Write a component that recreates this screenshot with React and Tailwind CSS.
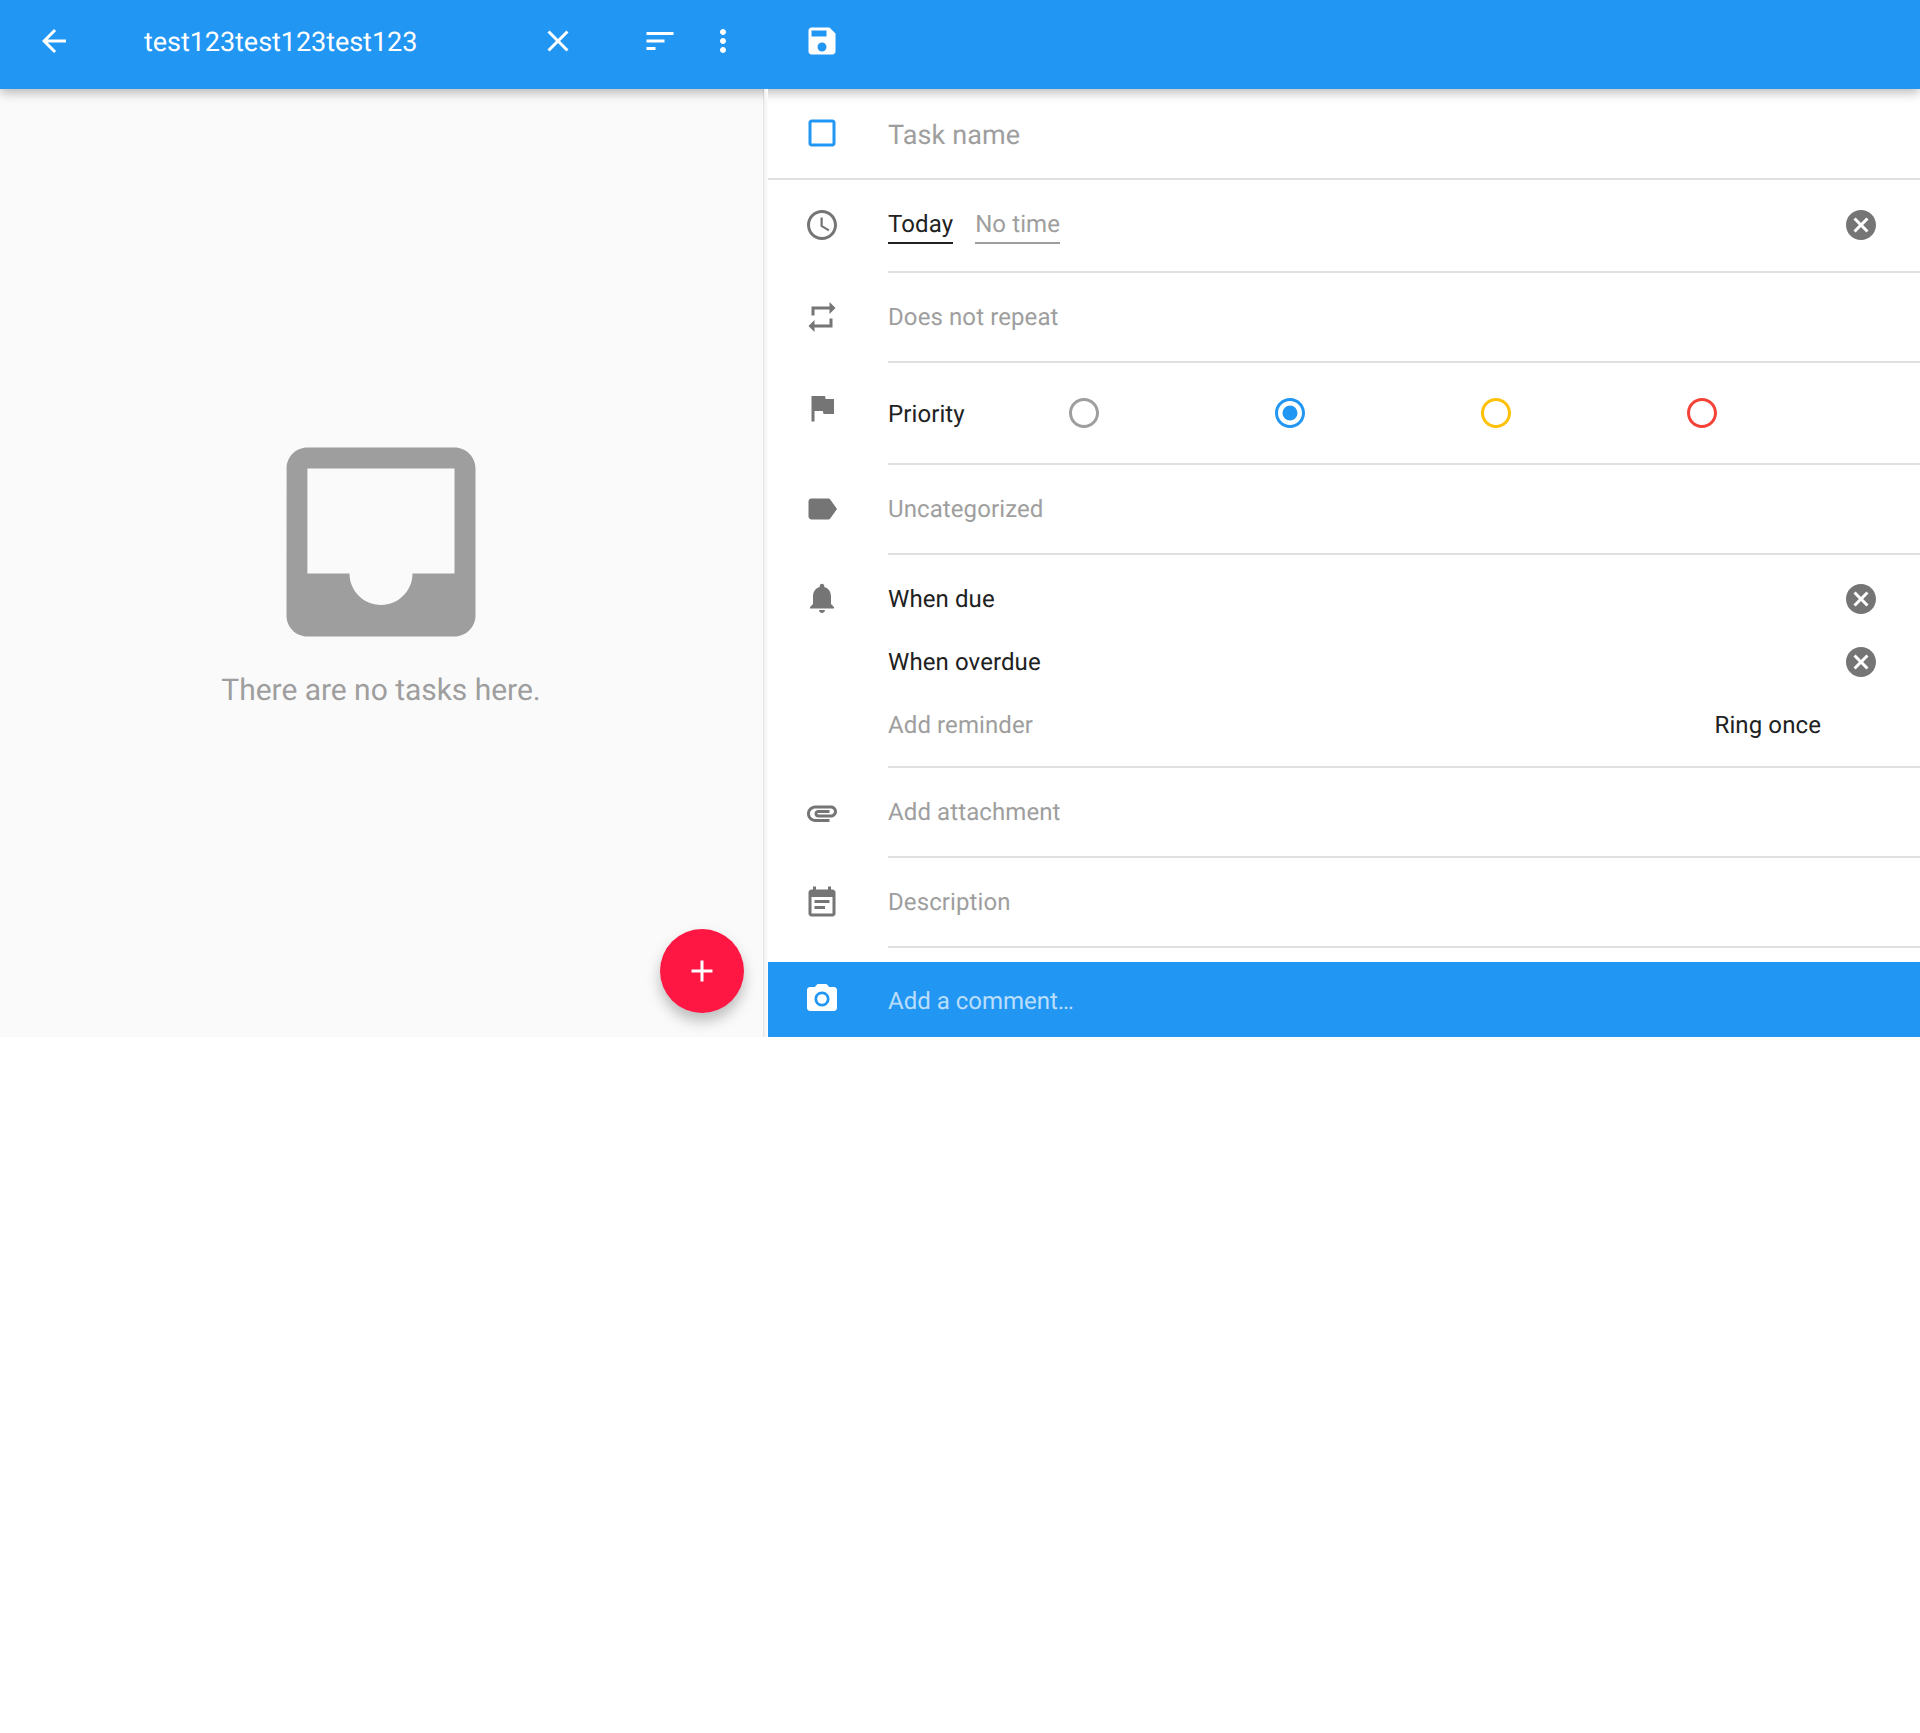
import React from "react";

const P = {
  back: "M20 11H7.83l5.59-5.59L12 4l-8 8 8 8 1.41-1.41L7.83 13H20v-2z",
  clear: "M19 6.41L17.59 5 12 10.59 6.41 5 5 6.41 10.59 12 5 17.59 6.41 19 12 13.41 17.59 19 19 17.59 13.41 12z",
  sort: "M3 18h6v-2H3v2zM3 6v2h18V6H3zm0 7h12v-2H3v2z",
  more: "M12 8c1.1 0 2-.9 2-2s-.9-2-2-2-2 .9-2 2 .9 2 2 2zm0 2c-1.1 0-2 .9-2 2s.9 2 2 2 2-.9 2-2-.9-2-2-2zm0 6c-1.1 0-2 .9-2 2s.9 2 2 2 2-.9 2-2-.9-2-2-2z",
  save: "M17 3H5c-1.11 0-2 .9-2 2v14c0 1.1.89 2 2 2h14c1.1 0 2-.9 2-2V7l-4-4zm-5 16c-1.66 0-3-1.34-3-3s1.34-3 3-3 3 1.34 3 3-1.34 3-3 3zm3-10H5V5h10v4z",
  box: "M19 5v14H5V5h14m0-2H5c-1.1 0-2 .9-2 2v14c0 1.1.9 2 2 2h14c1.1 0 2-.9 2-2V5c0-1.1-.9-2-2-2z",
  clock: "M11.99 2C6.47 2 2 6.48 2 12s4.47 10 9.99 10C17.52 22 22 17.52 22 12S17.52 2 11.99 2zM12 20c-4.42 0-8-3.58-8-8s3.58-8 8-8 8 3.58 8 8-3.58 8-8 8zm.5-13H11v6l5.25 3.15.75-1.23-4.5-2.67z",
  repeat: "M7 7h10v3l4-4-4-4v3H5v6h2V7zm10 10H7v-3l-4 4 4 4v-3h12v-6h-2v4z",
  flag: "M14.4 6L14 4H5v17h2v-7h5.6l.4 2h7V6z",
  label: "M17.63 5.84C17.27 5.33 16.67 5 16 5L5 5.01C3.9 5.01 3 5.9 3 7v10c0 1.1.9 1.99 2 1.99L16 19c.67 0 1.27-.33 1.63-.84L22 12l-4.37-6.16z",
  bell: "M12 22c1.1 0 2-.9 2-2h-4c0 1.1.89 2 2 2zm6-6v-5c0-3.07-1.64-5.64-4.5-6.32V4c0-.83-.67-1.5-1.5-1.5s-1.5.67-1.5 1.5v.68C7.63 5.36 6 7.92 6 11v5l-2 2v1h16v-1l-2-2z",
  clip: "M2 12.5C2 9.46 4.46 7 7.5 7H18c2.21 0 4 1.79 4 4s-1.79 4-4 4H9.5C8.12 15 7 13.88 7 12.5S8.12 10 9.5 10H17v2H9.41c-.55 0-.55 1 0 1H18c1.1 0 2-.9 2-2s-.9-2-2-2H7.5C5.57 9 4 10.57 4 12.5S5.57 16 7.5 16H17v2H7.5C4.46 18 2 15.54 2 12.5z",
  note: "M17 10H7v2h10v-2zm2-7h-1V1h-2v2H8V1H6v2H5c-1.11 0-1.99.9-1.99 2L3 19c0 1.1.89 2 2 2h14c1.1 0 2-.9 2-2V5c0-1.1-.9-2-2-2zm0 16H5V8h14v11zm-5-5H7v2h7v-2z",
  camera: "M9 2L7.17 4H4c-1.1 0-2 .9-2 2v12c0 1.1.9 2 2 2h16c1.1 0 2-.9 2-2V6c0-1.1-.9-2-2-2h-3.17L15 2H9zm3 15c-2.76 0-5-2.24-5-5s2.24-5 5-5 5 2.24 5 5-2.24 5-5 5z",
  inbox: "M19 3H4.99c-1.11 0-1.98.89-1.98 2L3 19c0 1.1.88 2 1.99 2H19c1.1 0 2-.9 2-2V5c0-1.11-.9-2-2-2zm0 12h-4c0 1.66-1.35 3-3 3s-3-1.34-3-3H4.99V5H19v10z",
  cancel: "M12 2C6.47 2 2 6.47 2 12s4.47 10 10 10 10-4.47 10-10S17.53 2 12 2zm5 13.59L15.59 17 12 13.41 8.41 17 7 15.59 10.59 12 7 8.41 8.41 7 12 10.59 15.59 7 17 8.41 13.41 12 17 15.59z",
  add: "M19 13h-6v6h-2v-6H5v-2h6V5h2v6h6v2z",
  radio: "M12 2C6.48 2 2 6.48 2 12s4.48 10 10 10 10-4.48 10-10S17.52 2 12 2zm0 18c-4.42 0-8-3.58-8-8s3.58-8 8-8 8 3.58 8 8-3.58 8-8 8z",
};

function Icon({ d, className = "text-[#757575]", children }) {
  return (
    <svg viewBox="0 0 24 24" fill="currentColor" className={`block w-9 h-9 shrink-0 ${className}`}>
      <path d={d} />
      {children}
    </svg>
  );
}

function Row({ icon, iconClass = "", height, children }) {
  return (
    <div className="flex items-center">
      <div className={`ml-9 w-[84px] shrink-0 ${iconClass}`}>{icon && <Icon d={icon} />}</div>
      <div className={`flex-1 flex items-center border-b-2 border-[#e0e0e0] ${height}`}>{children}</div>
    </div>
  );
}

const hint = "text-[24px] leading-[32px] tracking-[0.1px] text-[#9e9e9e]";
const dark = "text-[24px] leading-[32px] tracking-[0.1px] text-[#212121]";

function Radio({ className, checked }) {
  return (
    <div className="w-[206px] flex justify-center">
      <Icon d={P.radio} className={className}>
        {checked && <circle cx="12" cy="12" r="5" />}
      </Icon>
    </div>
  );
}

export default function App() {
  return (
    <div className="w-[1920px] h-[1733px] bg-white font-['Roboto',sans-serif] [text-rendering:geometricPrecision]">
      <div className="h-[1037px] flex flex-col overflow-hidden">
        <header className="relative z-10 h-[89px] shrink-0 bg-[#2196f3] flex items-center pb-[7px] shadow-[0_4px_10px_rgba(0,0,0,0.26)]">
          <div className="ml-9"><Icon d={P.back} className="text-white" /></div>
          <div className="ml-[72px] w-[396px] pt-[1px] text-[27px] leading-[36px] tracking-[-0.05px] text-white whitespace-nowrap">test123test123test123</div>
          <Icon d={P.clear} className="text-white" />
          <div className="ml-[66px]"><Icon d={P.sort} className="text-white" /></div>
          <div className="ml-[27px]"><Icon d={P.more} className="text-white" /></div>
          <div className="ml-[63px]"><Icon d={P.save} className="text-white" /></div>
        </header>
        <div className="flex-1 flex min-h-0">
          <section className="relative w-[764px] shrink-0 bg-[#fafafa] border-r border-[#e6e6e6] pr-[1px] flex flex-col items-center">
            <svg viewBox="0 0 24 24" fill="#9e9e9e" className="block w-[252px] h-[252px] mt-[327px]"><path d={P.inbox} /></svg>
            <div className="mt-[3px] text-[30px] leading-[40px] tracking-[-0.03px] text-[#9e9e9e]">There are no tasks here.</div>
            <button className="absolute right-[19px] bottom-[24px] w-[84px] h-[84px] rounded-full bg-[#ff1744] flex items-center justify-center shadow-[0_8px_14px_rgba(0,0,0,0.25)]">
              <Icon d={P.add} className="text-white" />
            </button>
          </section>
          <div className="relative z-20 w-[4px] shrink-0 bg-linear-to-r from-[#efefef] to-[#fdfdfd]" />
          <main className="flex-1 flex flex-col min-w-0">
            <div className="h-[91px] flex items-center border-b-2 border-[#e0e0e0] pb-[2px]">
              <div className="ml-9 w-[84px] shrink-0"><Icon d={P.box} className="text-[#2196f3]" /></div>
              <div className="text-[27px] leading-[36px] tracking-[0.12px] text-[#9e9e9e] mt-[4px]">Task name</div>
            </div>
            <Row icon={P.clock} iconClass="-mt-[3px]" height="h-[93px]">
              <div className={`${dark} border-b-2 border-[#212121] h-[38px] pt-[2px] mb-[2px]`}>Today</div>
              <div className={`${hint} border-b-2 border-[#9e9e9e] h-[38px] pt-[2px] mb-[2px] ml-[22px]`}>No time</div>
              <div className="ml-auto mr-[41px] -mt-[1px]"><Icon d={P.cancel} /></div>
            </Row>
            <Row icon={P.repeat} iconClass="-mt-[2px]" height="h-[90px]"><div className={hint}>Does not repeat</div></Row>
            <Row icon={P.flag} iconClass="-mt-[13px]" height="h-[102px]">
              <div className={`${dark} w-[93px] mt-[1px]`}>Priority</div>
              <Radio className="text-[#9e9e9e]" />
              <Radio className="text-[#2196f3]" checked />
              <Radio className="text-[#ffc107]" />
              <Radio className="text-[#f44336]" />
            </Row>
            <Row icon={P.label} iconClass="-mt-[2px]" height="h-[90px]"><div className={hint}>Uncategorized</div></Row>
            <div className="flex">
              <div className="ml-9 w-[84px] shrink-0 pt-[25px]"><Icon d={P.bell} /></div>
              <div className="flex-1 border-b-2 border-[#e0e0e0] h-[213px] pt-[26px] flex flex-col gap-[27px]">
                <div className="flex items-center h-9"><div className={dark}>When due</div><div className="ml-auto mr-[41px]"><Icon d={P.cancel} /></div></div>
                <div className="flex items-center h-9"><div className={dark}>When overdue</div><div className="ml-auto mr-[41px]"><Icon d={P.cancel} /></div></div>
                <div className="flex items-center h-9 justify-between"><div className={hint}>Add reminder</div><div className={`${dark} mr-[99px]`}>Ring once</div></div>
              </div>
            </div>
            <Row icon={P.clip} height="h-[90px]"><div className={hint}>Add attachment</div></Row>
            <Row icon={P.note} iconClass="-mt-[1px]" height="h-[90px]"><div className={hint}>Description</div></Row>
            <div className="mt-[14px] h-[75px] bg-[#2196f3] flex items-center">
              <div className="ml-9 w-[84px] shrink-0 -mt-[2px]"><Icon d={P.camera} className="text-white"><circle cx="12" cy="12" r="3.2" /></Icon></div>
              <div className="text-[24px] leading-[32px] text-white/70 mt-[2px]">Add a comment…</div>
            </div>
          </main>
        </div>
      </div>
    </div>
  );
}
